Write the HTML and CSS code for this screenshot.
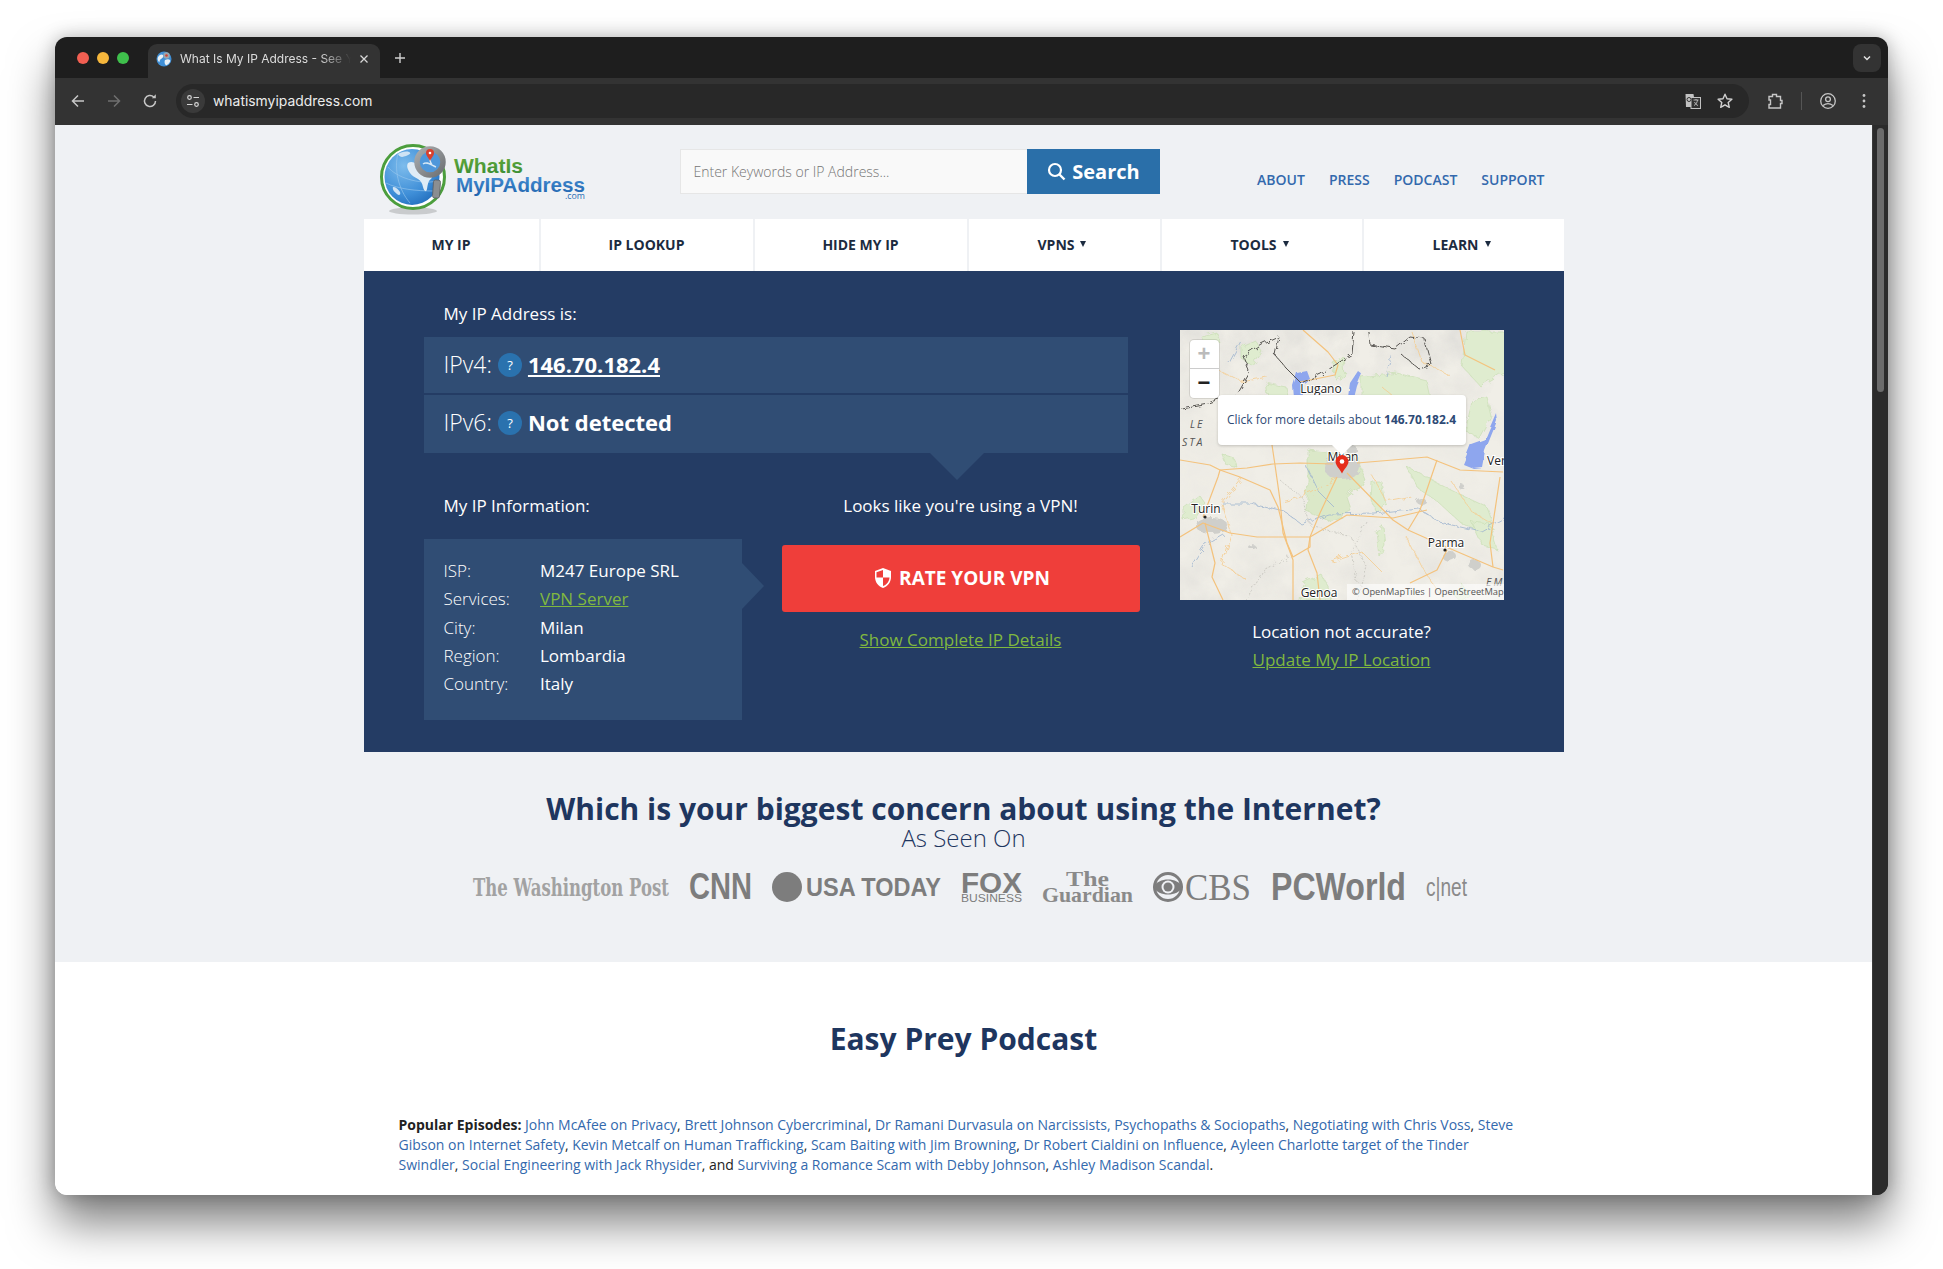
FILE: index.html
```html
<!DOCTYPE html>
<html lang="en">
<head>
    <meta charset="UTF-8">
    <title>What Is My IP Address - See Your Public Address - IPv4 &amp; IPv6</title>
    <link rel="stylesheet" href="styles.css">
</head>
<body>
<div class="window">
    <div class="tabstrip">
        <div class="lights"><i class="light red"></i><i class="light yellow"></i><i class="light green"></i></div>
        <div class="tab">
            <svg class="favicon" width="16" height="16" viewBox="0 0 16 16">
                <circle cx="8" cy="8" r="7.5" fill="#3f8fd6"/>
                <path d="M2 6c2-3 4-3 5-2s0 3-2 4-1 4-2 3-2-3-1-5zM9 9c2-1 4-1 5 0s-1 4-3 5-3-3-2-5z" fill="#e8f0f6"/>
                <circle cx="10.5" cy="4.5" r="3.2" fill="#9aa6ad"/>
                <circle cx="10.5" cy="4.5" r="1.3" fill="#d8402e"/>
            </svg>
            <span class="tab-title">What Is My IP Address - See Your</span>
            <svg class="tab-close" width="10" height="10" viewBox="0 0 10 10"><path d="M1.5 1.5l7 7M8.500 1.500l-7 7" stroke="#d8d8d8" stroke-width="1.300"/></svg>
        </div>
        <svg class="new-tab" width="12" height="12" viewBox="0 0 12 12"><path d="M6 1v10M1 6h10" stroke="#cfcfcf" stroke-width="1.400"/></svg>
        <div class="tab-search">
            <svg width="10" height="10" viewBox="0 0 10 10"><path d="M2 3.500l3 3 3-3" fill="none" stroke="#e2e2e2" stroke-width="1.500"/></svg>
        </div>
    </div>
    <div class="toolbar">
        <svg class="tool" viewBox="0 0 18 18"><path d="M15 9H4M9 3.500L3.500 9 9 14.500" fill="none" stroke="#c7c7c7" stroke-width="1.500"/></svg>
        <svg class="tool" viewBox="0 0 18 18"><path d="M3 9h11M9 3.500L14.500 9 9 14.500" fill="none" stroke="#707070" stroke-width="1.500"/></svg>
        <svg class="tool" viewBox="0 0 18 18"><path d="M14.500 9a5.500 5.500 0 1 1-1.700-4" fill="none" stroke="#c7c7c7" stroke-width="1.500"/><path d="M14.800 2.300v4h-4z" fill="#c7c7c7"/></svg>
        <div class="omnibox">
            <span class="site-info">
                <svg width="14" height="14" viewBox="0 0 14 14"><circle cx="3.500" cy="3.500" r="1.800" fill="none" stroke="#d6d6d6" stroke-width="1.200"/><path d="M7.500 3.500H13M1 10.500h5.500" stroke="#d6d6d6" stroke-width="1.200"/><circle cx="10.500" cy="10.500" r="1.800" fill="none" stroke="#d6d6d6" stroke-width="1.200"/></svg>
            </span>
            <span class="url">whatismyipaddress.com</span>
            <svg class="translate" width="18" height="18" viewBox="0 0 18 18">
                <path d="M1.500 2h8l2 13h-9.500z" fill="#c2c2c2"/>
                <rect x="7" y="5.500" width="9.500" height="11" fill="#333" stroke="#c2c2c2" stroke-width="1"/>
                <path d="M9.500 8h5M12 7v1M10 13.500c2-1 3.200-3 3.500-5.500M10.500 10c.6 1.500 2 3 3.500 3.500" fill="none" stroke="#c2c2c2" stroke-width=".9"/>
                <circle cx="5" cy="7.500" r="2" fill="none" stroke="#333" stroke-width="1"/>
            </svg>
            <svg class="star" width="18" height="18" viewBox="0 0 18 18"><path d="M9 2.200l2 4.500 4.900.5-3.700 3.300 1.100 4.800L9 12.800l-4.300 2.500 1.100-4.800L2.100 7.200 7 6.700z" fill="none" stroke="#d0d0d0" stroke-width="1.400" stroke-linejoin="round"/></svg>
        </div>
        <svg class="tool ext" viewBox="0 0 18 18"><path d="M3 4.500h3.500V2.500h4v2H14.500v4h1.500v3h-1.500V16H3v-3.500h1.500v-4.500H3z" fill="none" stroke="#c7c7c7" stroke-width="1.400"/></svg>
        <i class="tool-sep"></i>
        <svg class="tool profile" viewBox="0 0 18 18"><circle cx="9" cy="9" r="7.300" fill="none" stroke="#c7c7c7" stroke-width="1.300"/><circle cx="9" cy="7.300" r="2.400" fill="none" stroke="#c7c7c7" stroke-width="1.300"/><path d="M4 13.500c3-2.200 7-2.200 10 0" fill="none" stroke="#c7c7c7" stroke-width="1.300"/></svg>
        <svg class="tool menu" viewBox="0 0 18 18"><circle cx="9" cy="3.500" r="1.400" fill="#c7c7c7"/><circle cx="9" cy="9" r="1.400" fill="#c7c7c7"/><circle cx="9" cy="14.500" r="1.400" fill="#c7c7c7"/></svg>
    </div>

    <div class="viewport">
        <div class="page">
            <div class="grey-area">
                <div class="wrap">
                    <header class="site-header">
                        <svg class="logo" width="212" height="78" viewBox="0 0 212 78">
                            <defs>
                                <radialGradient id="globe" cx=".35" cy=".3" r=".85"><stop offset="0" stop-color="#7dbcec"/><stop offset=".6" stop-color="#3f8fd8"/><stop offset="1" stop-color="#1c66b6"/></radialGradient>
                                <linearGradient id="blueText" x1="0" y1="0" x2="0" y2="1"><stop offset="0" stop-color="#4a94d8"/><stop offset="1" stop-color="#1f63ad"/></linearGradient>
                                <linearGradient id="greenText" x1="0" y1="0" x2="0" y2="1"><stop offset="0" stop-color="#69ad3c"/><stop offset="1" stop-color="#358a34"/></linearGradient>
                                <linearGradient id="lensRing" x1="0" y1="0" x2="1" y2="1"><stop offset="0" stop-color="#a9acae"/><stop offset="1" stop-color="#6e7174"/></linearGradient>
                            </defs>
                            <ellipse cx="35" cy="72" rx="24" ry="3.500" fill="#c9cbcd"/>
                            <ellipse cx="35" cy="38" rx="31.500" ry="31.500" fill="#fff" stroke="#4c9e3d" stroke-width="3"/>
                            <ellipse cx="34" cy="38" rx="27.500" ry="28" fill="url(#globe)"/>
                            <path d="M10 28c8 10 30 18 50 14M20 14c-4 16 0 36 12 50M8 44c12 6 30 8 48 8" fill="none" stroke="#9cc9ee" stroke-width=".6"/>
                            <path d="M30 24c3-2 6-1 8 1 3 0 10 3 15 6 3 3 2 6 0 9-3 2-3 5-4 10-1 4-3 2-4-2s-2-6-5-8-6-3-8-6-4-7-2-10z" fill="#dfecf6"/>
                            <path d="M20 15c3-2 8-3 11-2s0 3-3 4-6 2-8-2zM15 48c3 0 5 2 7 5 1 3-1 4-3 2s-5-4-4-7z" fill="#cfe3f4"/>
                            <circle cx="52" cy="23" r="13" fill="#4f97da" stroke="url(#lensRing)" stroke-width="5.500"/>
                            <path d="M45 25c4-3 8 1 13 3M52 15c-1 5 0 8 2 11" fill="none" stroke="#d5e7f5" stroke-width="1.500"/>
                            <path d="M48 14a4 4 0 0 1 8 0c0 3-3 5-4 8-1-3-4-5-4-8z" fill="#d9402f"/>
                            <circle cx="52" cy="14" r="1.300" fill="#fff"/>
                            <rect x="55" y="41" width="7" height="18" rx="2" transform="rotate(4 58 50)" fill="#8b8e91" stroke="#5c5f62" stroke-width=".8"/>
                            <text x="76" y="34" class="logo-what" fill="url(#greenText)" textLength="69" lengthAdjust="spacingAndGlyphs">WhatIs</text>
                            <text x="78" y="53" class="logo-my" fill="url(#blueText)" textLength="129" lengthAdjust="spacingAndGlyphs">MyIPAddress</text>
                            <text x="187" y="60" class="logo-com" textLength="20" lengthAdjust="spacingAndGlyphs">.com</text>
                        </svg>
                        <form class="search">
                            <input class="search-input" type="text" placeholder="Enter Keywords or IP Address...">
                            <button class="search-btn" type="button">
                                <svg width="19" height="19" viewBox="0 0 19 19"><circle cx="8" cy="8" r="6" fill="none" stroke="#fff" stroke-width="2.200"/><path d="M12.500 12.500l5 5" stroke="#fff" stroke-width="2.400"/></svg>
                                Search
                            </button>
                        </form>
                        <nav class="top-links">
                            <a href="#">ABOUT</a>
                            <a href="#">PRESS</a>
                            <a href="#">PODCAST</a>
                            <a href="#">SUPPORT</a>
                        </nav>
                    </header>

                    <nav class="main-nav">
                        <a href="#" style="width:177px">MY IP</a>
                        <a href="#" style="width:214px">IP LOOKUP</a>
                        <a href="#" style="width:214px">HIDE MY IP</a>
                        <a href="#" style="width:193px">VPNS <span class="caret"></span></a>
                        <a href="#" style="width:202px">TOOLS <span class="caret"></span></a>
                        <a href="#" style="width:200px">LEARN <span class="caret"></span></a>
                    </nav>

                    <section class="panel">
                        <div class="panel-left">
                            <div class="label ip-label">My IP Address is:</div>
                            <div class="ip-row ip-row-first">
                                <span class="ip-kind">IPv4:</span>
                                <span class="help">?</span>
                                <a class="ip-value" href="#">146.70.182.4</a>
                            </div>
                            <div class="ip-row ip-row-last">
                                <span class="ip-kind">IPv6:</span>
                                <span class="help">?</span>
                                <span class="ip-value plain">Not detected</span>
                            </div>
                            <div class="panel-lower">
                                <div class="info-col">
                                    <div class="label">My IP Information:</div>
                                    <div class="info-box">
                                        <div class="info-row"><span>ISP:</span><b>M247 Europe SRL</b></div>
                                        <div class="info-row"><span>Services:</span><b><a class="green-link" href="#">VPN Server</a></b></div>
                                        <div class="info-row"><span>City:</span><b>Milan</b></div>
                                        <div class="info-row"><span>Region:</span><b>Lombardia</b></div>
                                        <div class="info-row"><span>Country:</span><b>Italy</b></div>
                                    </div>
                                </div>
                                <div class="vpn-col">
                                    <div class="label">Looks like you're using a VPN!</div>
                                    <a class="rate-btn" href="#">
                                        <svg width="18" height="22" viewBox="0 0 18 22"><path d="M9 1l8 3v6c0 5-3 9-8 11-5-2-8-6-8-11V4z" fill="#fff"/><path d="M9 3v7.500H2.500V5.200zM9 10.500h6.500c-.2 4-2.700 7-6.500 8.600z" fill="#ef3e3a"/></svg>
                                        RATE YOUR VPN
                                    </a>
                                    <a class="green-link details-link" href="#">Show Complete IP Details</a>
                                </div>
                            </div>
                        </div>
                        <div class="panel-map">
                            <div class="map">
                                <svg width="324" height="270" viewBox="0 0 324 270">
                                    <defs>
                                        <filter id="hills" x="0" y="0" width="100%" height="100%">
                                            <feTurbulence type="fractalNoise" baseFrequency=".03" numOctaves="4" seed="7"/>
                                            <feColorMatrix values="0 0 0 0 .72  0 0 0 0 .71  0 0 0 0 .68  1.800 0 0 0 -.62"/>
                                        </filter>
                                        <filter id="wiggle" x="-5%" y="-5%" width="110%" height="110%">
                                            <feTurbulence type="turbulence" baseFrequency=".09" numOctaves="2" seed="3"/>
                                            <feDisplacementMap in="SourceGraphic" scale="6"/>
                                        </filter>
                                        <filter id="wiggle-soft" x="-5%" y="-5%" width="110%" height="110%">
                                            <feTurbulence type="turbulence" baseFrequency=".05" numOctaves="2" seed="9"/>
                                            <feDisplacementMap in="SourceGraphic" scale="4"/>
                                        </filter>
                                        <linearGradient id="hillFade" x1="0" y1="0" x2="0" y2="1">
                                            <stop offset="0" stop-color="#fff"/>
                                            <stop offset=".3" stop-color="#666"/>
                                            <stop offset=".55" stop-color="#222"/>
                                            <stop offset=".8" stop-color="#555"/>
                                            <stop offset="1" stop-color="#bbb"/>
                                        </linearGradient>
                                        <mask id="hillMask"><rect width="324" height="270" fill="url(#hillFade)"/></mask>
                                    </defs>
                                    <rect width="324" height="270" fill="#f0eee7"/>
                                    <g mask="url(#hillMask)"><rect width="324" height="270" filter="url(#hills)"/></g>
                                    <g fill="#dfeccf" stroke="#c4dcae" stroke-width=".6" filter="url(#wiggle)">
                                        <path d="M127 118l48 6 10 26-20 15 5 15-20 10-25-10 2-30z" fill="#dbe8c8"/>
                                        <path d="M180 46l35-5 30 8 5 22-30 8-20-8-20 0z"/>
                                        <path d="M285 0h39v40l-25 15-18-20z"/>
                                        <path d="M290 70l15-5 5 20-12 22-15-8z"/>
                                        <path d="M60 15l14-6 6 11-9 14-11-7z"/>
                                        <path d="M85 52l20 4 3 14-20 2z"/>
                                        <path d="M225 135l12 22 20 14 22 20 20 10 14-4-8-22-26-12-24-12z"/>
                                        <path d="M190 150l10 0 4 22-8 10-7-14z"/>
                                        <path d="M2 176l16-12 6 8-12 15-10 2z"/>
                                        <path d="M122 252l18-9 8 14 3 13h-32z"/>
                                        <path d="M40 122l12 4 4 10-12-3z"/>
                                        <path d="M195 200l7-5 2 20-6 10z"/>
                                        <path d="M290 190l18 2 8 26-15-4z"/>
                                        <path d="M270 262l12-8 6 10-8 6z"/>
                                        <path d="M20 5l15-4 3 10-14 4z"/>
                                        <path d="M150 30l12-5 2 20-10 3z"/>
                                    </g>
                                    <g fill="#cfcfcb" filter="url(#wiggle)">
                                        <ellipse cx="161" cy="136" rx="18" ry="13"/>
                                        <ellipse cx="30" cy="194" rx="16" ry="8"/>
                                        <ellipse cx="268" cy="225" rx="7" ry="5"/>
                                        <ellipse cx="293" cy="233" rx="6" ry="5"/>
                                        <ellipse cx="70" cy="215" rx="4" ry="2"/>
                                        <ellipse cx="240" cy="170" rx="5" ry="3"/>
                                        <ellipse cx="280" cy="155" rx="3" ry="2"/>
                                        <ellipse cx="170" cy="118" rx="6" ry="4"/>
                                    </g>
                                    <g fill="none" stroke="#9db4cf" stroke-width=".8" filter="url(#wiggle)">
                                        <path d="M40 172l30 0 33 8 17 13 27-10 46-1 44-5 20 13 43 10 23-13"/>
                                        <path d="M125 135l12 25 15 15"/>
                                        <path d="M10 235l14-22 18-10"/>
                                        <path d="M210 25l-5 20M60 10l-12 22"/>
                                    </g>
                                    <g fill="#8ea6ee" filter="url(#wiggle-soft)">
                                        <path d="M116 42l10-2 3 8-8 5 1 12-9 2-1-12z"/>
                                        <path d="M167 66l2-14 8-12 4 3-5 12-3 12z"/>
                                        <path d="M315 82l-11 26-14 5-8 20 10 4 9-1 3-16 12-30z"/>
                                    </g>
                                    <g fill="none" stroke="#bdbcb4" stroke-width=".7" stroke-dasharray="2 1.500" filter="url(#wiggle)">
                                        <path d="M100 150l20 15 10 30 40 10 15 30-10 35"/>
                                        <path d="M185 190l-15 30 5 30"/>
                                        <path d="M65 270l15-30 30-15"/>
                                    </g>
                                    <g fill="none" stroke="#f5cb8e" stroke-width=".8" filter="url(#wiggle)">
                                        <path d="M60 147l-20 25 10 31M100 170l30-8 27-15M190 143l15 27 25-5M270 150l20 30 25 15"/>
                                        <path d="M50 203l-10 30 25 15M150 230l30-10 20 20M225 205l15 30 20 30"/>
                                        <path d="M230 0l10 30 30 15M30 35l30 15 25-5M200 55l30 25"/>
                                    </g>
                                    <g fill="none" stroke="#f4c27c" stroke-width="1.200" stroke-linejoin="round">
                                        <path d="M23 187l15-40 2-7 27-2 26-4 27-1 33 1"/>
                                        <path d="M40 140l20 7 30 13 8 17 9 36 6 14"/>
                                        <path d="M92 115l3 20 5 35 3 33 10 27v40"/>
                                        <path d="M167 143l46 47 15 10 29 13 56 24 10 3"/>
                                        <path d="M157 147l-17 36-10 24-2 13 9 23 3 27"/>
                                        <path d="M0 207l23-14 27 10 27 4h53"/>
                                        <path d="M130 207l37-22 46 3 34-8"/>
                                        <path d="M177 133l36-3 34-3 33 13 43 2"/>
                                        <path d="M257 130l-17 50-12 20"/>
                                        <path d="M25 193l10 40-3 14 11 23"/>
                                        <path d="M113 227l17-10v-10"/>
                                        <path d="M313 237l-3-24 10-66"/>
                                        <path d="M230 253l27-13 10-20"/>
                                        <path d="M123 0l25 22 10 13-3 10-35 7"/>
                                        <path d="M0 130l30 5 10 5"/>
                                        <path d="M280 0l5 25 30 15"/>
                                    </g>
                                    <g fill="none" stroke="#55534f" stroke-width="1" filter="url(#wiggle)">
                                        <path d="M0 77l27-5 11-4 17-5 13-23-6-15 18-12 17-8-4 18 12 14 15 15 20-9 10-8 20-13 2-22"/>
                                        <path d="M187 0l1 13 25 4 15-12 15 2 7 26-13 4-17-14"/>
                                    </g>
                                    <text class="map-city" x="141" y="63" text-anchor="middle">Lugano</text>
                                    <text class="map-city" x="163" y="131" text-anchor="middle">Milan</text>
                                    <text class="map-city" x="26" y="183" text-anchor="middle">Turin</text>
                                    <text class="map-city" x="266" y="217" text-anchor="middle">Parma</text>
                                    <text class="map-city" x="139" y="267" text-anchor="middle">Genoa</text>
                                    <text class="map-city" x="307" y="135">Ver</text>
                                    <text class="map-region" x="10" y="98">LE</text>
                                    <text class="map-region" x="2" y="116">STA</text>
                                    <text class="map-region" x="306" y="256">EM</text>
                                    <circle cx="25" cy="187" r="1.600" fill="#222"/>
                                    <circle cx="265" cy="220" r="1.600" fill="#222"/>
                                    <rect x="167" y="254" width="157" height="16" fill="#fff" opacity=".6"/>
                                    <text class="map-attr" x="172" y="265">© OpenMapTiles | OpenStreetMap</text>
                                    <path d="M162 125a6.500 6.500 0 0 1 6.500 6.500c0 4-4 7-6.500 12-2.500-5-6.500-8-6.500-12a6.500 6.500 0 0 1 6.500-6.500z" fill="#e62d1c"/>
                                    <circle cx="162" cy="131.500" r="2.300" fill="#fff"/>
                                </svg>
                                <div class="map-zoom">
                                    <span class="zoom-btn faded">+</span>
                                    <span class="zoom-btn">−</span>
                                </div>
                                <div class="map-popup">Click for more details about <b>146.70.182.4</b></div>
                            </div>
                            <div class="label location-q">Location not accurate?</div>
                            <a class="green-link location-link" href="#">Update My IP Location</a>
                        </div>
                    </section>

                    <h2 class="poll-title">Which is your biggest concern about using the Internet?</h2>
                    <div class="seen-on">As Seen On</div>
                    <div class="press-logos">
                        <svg width="196" height="30"><text class="lg-wapo" x="0" y="24" textLength="196" lengthAdjust="spacingAndGlyphs">The Washington Post</text></svg>
                        <svg width="63" height="30"><text class="lg-cnn" x="0" y="27" textLength="63" lengthAdjust="spacingAndGlyphs">CNN</text></svg>
                        <svg width="169" height="30"><circle cx="15" cy="15" r="15" fill="#7d7d7d"/><text class="lg-usa" x="34" y="24" textLength="135" lengthAdjust="spacingAndGlyphs">USA TODAY</text></svg>
                        <svg width="61" height="30"><text class="lg-fox" x="0" y="21" textLength="61" lengthAdjust="spacingAndGlyphs">FOX</text><text class="lg-fox-sub" x="0" y="30" textLength="61" lengthAdjust="spacingAndGlyphs">BUSINESS</text></svg>
                        <svg width="91" height="30"><text class="lg-guardian" x="24" y="14" textLength="43" lengthAdjust="spacingAndGlyphs">The</text><text class="lg-guardian" x="0" y="30" textLength="91" lengthAdjust="spacingAndGlyphs">Guardian</text></svg>
                        <svg width="98" height="30">
                            <circle cx="15" cy="15" r="13.500" fill="none" stroke="#7d7d7d" stroke-width="3"/>
                            <path d="M0 15C6 5 24 5 30 15 24 25 6 25 0 15z" fill="#7d7d7d"/>
                            <circle cx="15" cy="15" r="6.500" fill="#eff1f4"/>
                            <circle cx="15" cy="15" r="4.500" fill="#7d7d7d"/>
                            <text class="lg-cbs" x="32" y="28" textLength="66" lengthAdjust="spacingAndGlyphs">CBS</text>
                        </svg>
                        <svg width="135" height="30"><text class="lg-pc" x="0" y="28" textLength="135" lengthAdjust="spacingAndGlyphs">PCWorld</text></svg>
                        <svg width="41" height="30"><text class="lg-cnet" x="0" y="24" textLength="41" lengthAdjust="spacingAndGlyphs">c|net</text></svg>
                    </div>
                </div>
            </div>

            <div class="white-area">
                <div class="wrap">
                    <h2 class="podcast-title">Easy Prey Podcast</h2>
                    <p class="episodes"><b>Popular Episodes:</b> <a href="#">John McAfee on Privacy</a>, <a href="#">Brett Johnson Cybercriminal</a>, <a href="#">Dr Ramani Durvasula on Narcissists, Psychopaths &amp; Sociopaths</a>, <a href="#">Negotiating with Chris Voss</a>, <a href="#">Steve</a> <a href="#">Gibson on Internet Safety</a>, <a href="#">Kevin Metcalf on Human Trafficking</a>, <a href="#">Scam Baiting with Jim Browning</a>, <a href="#">Dr Robert Cialdini on Influence</a>, <a href="#">Ayleen Charlotte target of the Tinder</a> <a href="#">Swindler</a>, <a href="#">Social Engineering with Jack Rhysider</a>, and <a href="#">Surviving a Romance Scam with Debby Johnson</a>, <a href="#">Ashley Madison Scandal</a>.</p>
                </div>
            </div>
        </div>
        <div class="scrollbar"><div class="thumb"></div></div>
    </div>
</div>
</body>
</html>
```

FILE: styles.css
```css
* {
    box-sizing: border-box;
}

html, body {
    margin: 0;
    height: 1269px;
    overflow: hidden;
    background-color: #fff;
}

body {
    padding: 37px 0 0 55px;
    font-family: "Open Sans", Arial, sans-serif;
}

a {
    color: inherit;
}

/* browser window */
.window {
    width: 1833px;
    height: 1158px;
    border-radius: 12px;
    overflow: hidden;
    background-color: #1e1e1e;
    box-shadow: 0 28px 46px rgba(0,0,0,0.5), 0 0 18px rgba(0,0,0,0.25);
    display: flex;
    flex-direction: column;
}

.tabstrip {
    height: 41px;
    flex: none;
    display: flex;
    padding-top: 7px;
    position: relative;
}

.lights {
    display: flex;
    gap: 8px;
    padding: 8px 0 0 22px;
    width: 93px;
}

.light {
    width: 12px;
    height: 12px;
    border-radius: 50%;
}

.red { background-color: #f25f52; }
.yellow { background-color: #f6b73c; }
.green { background-color: #3fc04c; }

.tab {
    width: 232px;
    height: 34px;
    background-color: #333;
    border-radius: 9px 9px 0 0;
    display: flex;
    align-items: center;
    padding: 0 11px 5px 8px;
    gap: 8px;
}

.tab-title {
    flex: 1;
    color: #dcdcdc;
    font: 12px/16px Inter, Roboto, sans-serif;
    white-space: nowrap;
    overflow: hidden;
    -webkit-mask-image: linear-gradient(to right, #000 82%, transparent 100%);
    mask-image: linear-gradient(to right, #000 82%, transparent 100%);
}

.new-tab {
    margin: 8px 0 0 14px;
}

.tab-search {
    margin-left: auto;
    margin-right: 7px;
    width: 28px;
    height: 28px;
    border-radius: 8px;
    background-color: #333;
    display: flex;
    align-items: center;
    justify-content: center;
}

.toolbar {
    height: 47px;
    flex: none;
    background-color: #333;
    display: flex;
    align-items: center;
    padding: 0 0 1px 14px;
    gap: 18px;
}

.tool {
    width: 18px;
    height: 18px;
    flex: none;
}

.omnibox {
    width: 1573px;
    height: 34px;
    margin-left: -1px;
    flex: none;
    border-radius: 17px;
    background-color: #282828;
    display: flex;
    align-items: center;
    padding: 0 15px 0 5px;
}

.site-info {
    width: 24px;
    height: 24px;
    border-radius: 50%;
    background-color: #3a3a3a;
    display: flex;
    align-items: center;
    justify-content: center;
}

.url {
    margin-left: 8px;
    flex: 1;
    color: #ececec;
    font: 13.900px/18px Inter, Roboto, sans-serif;
}

.star {
    margin-left: 14px;
}

.ext {
    margin-left: -1px;
}

.tool-sep {
    width: 1px;
    height: 18px;
    background-color: #555;
    margin: 0 -1px;
}

/* page */
.viewport {
    flex: 1;
    display: flex;
    min-height: 0;
}

.page {
    flex: 1;
    overflow: hidden;
    background-color: #fff;
}

.scrollbar {
    width: 16px;
    flex: none;
    background-color: #2b2b2b;
    border-left: 1px solid #3a3a3a;
    padding: 3px 4px 0;
}

.thumb {
    height: 264px;
    border-radius: 4px;
    background-color: #6b6b6b;
}

.grey-area {
    height: 837px;
    background-color: #eff1f4;
}

.wrap {
    width: 1200px;
    margin: 0 auto;
}

.site-header {
    height: 94px;
    display: flex;
}

.logo {
    margin: 14px 0 0 14px;
    flex: none;
    overflow: visible;
}

.logo-what {
    font: bold 21px "Liberation Sans", Arial, sans-serif;
}

.logo-my {
    font: bold 21px "Liberation Sans", Arial, sans-serif;
}

.logo-com {
    font: 9px "Open Sans", sans-serif;
    fill: #2a6fb5;
}

.search {
    display: flex;
    margin: 24px 0 0 90px;
    height: 45px;
}

.search-input {
    width: 347px;
    border: 1px solid #e6e6e6;
    border-right: none;
    background-color: #f9f9f9;
    padding: 0 13px;
    font: 14px "Open Sans", sans-serif;
    color: #555;
}

.search-input::placeholder {
    color: #757575;
    font-weight: 300;
}

.search-btn {
    width: 133px;
    border: none;
    padding-left: 7px;
    background-color: #2a6fa9;
    color: #fff;
    font: bold 20px "Open Sans", sans-serif;
    display: flex;
    align-items: center;
    justify-content: center;
    gap: 6px;
}

.top-links {
    margin-left: auto;
    padding: 45px 19px 0 0;
    display: flex;
    gap: 24px;
    font-size: 14px;
    font-weight: 600;
    line-height: 20px;
    color: #3369ad;
}

.top-links a {
    text-decoration: none;
}

.main-nav {
    height: 52px;
    display: flex;
    background-color: #fff;
}

.main-nav a {
    display: flex;
    align-items: center;
    justify-content: center;
    gap: 5px;
    padding-bottom: 2px;
    border-right: 2px solid #eff1f4;
    color: #1c2b40;
    font-size: 14px;
    font-weight: 700;
    text-decoration: none;
}

.main-nav a:last-child {
    border-right: none;
}

.caret {
    margin: 0 4px 0 1px;
    border-style: solid;
    border-width: 6px 3px 0;
    border-color: #1c2b40 transparent transparent;
}

.panel {
    height: 481px;
    background-color: #243c64;
    color: #fff;
    display: flex;
    padding-left: 60px;
}

.panel-left {
    width: 716px;
    padding-top: 29px;
}

.label {
    font-size: 17px;
    line-height: 28px;
    padding-left: 20px;
}

.ip-label {
    margin-bottom: 9px;
}

.ip-row {
    width: 704px;
    background-color: #304d74;
    display: flex;
    align-items: center;
    padding: 0 0 2px 20px;
}

.ip-row-first {
    height: 56px;
    margin-bottom: 2px;
}

.ip-row-last {
    height: 58px;
    padding-bottom: 4px;
    position: relative;
}

.ip-row-last::after {
    content: "";
    position: absolute;
    top: 100%;
    left: 506px;
    border-style: solid;
    border-width: 27px 27.500px 0;
    border-color: #304d74 transparent transparent;
}

.ip-kind {
    font-size: 23px;
    font-weight: 300;
}

.help {
    width: 24px;
    height: 24px;
    border-radius: 50%;
    background-color: #2a72ae;
    margin: 2px 6px 0 6px;
    font-size: 13px;
    line-height: 24px;
    text-align: center;
}

.ip-value {
    font-size: 22px;
    font-weight: 700;
}

.panel-lower {
    display: flex;
    padding-top: 39px;
}

.info-col {
    width: 318px;
}

.info-box {
    margin-top: 19px;
    height: 181px;
    background-color: #304d74;
    padding: 18px 20px;
    position: relative;
    font-size: 17px;
}

.info-box::after {
    content: "";
    position: absolute;
    top: 24px;
    left: 100%;
    border-style: solid;
    border-width: 23px 0 23px 22px;
    border-color: transparent transparent transparent #304d74;
}

.info-row {
    display: flex;
    height: 28.250px;
    line-height: 27px;
}

.info-row span {
    width: 96.500px;
    font-weight: 300;
}

.info-row b {
    font-weight: 400;
}

.green-link {
    color: #80b83f;
}

.vpn-col {
    width: 358px;
    margin-left: 40px;
    text-align: center;
}

.vpn-col .label {
    padding-left: 0;
}

.rate-btn {
    margin-top: 25px;
    height: 67px;
    padding: 0 0 2px 3px;
    border-radius: 3px;
    background-color: #ef3e3a;
    color: #fff;
    font-size: 19px;
    font-weight: 700;
    text-decoration: none;
    display: flex;
    align-items: center;
    justify-content: center;
    gap: 7px;
}

.details-link {
    display: block;
    margin-top: 14px;
    font-size: 17px;
    line-height: 28px;
}

.panel-map {
    margin-left: 40px;
    width: 324px;
    padding-top: 59px;
    text-align: center;
}

.map {
    width: 324px;
    height: 270px;
    position: relative;
    overflow: hidden;
}

.map svg {
    display: block;
}

.map-city {
    font: 12px "Open Sans", sans-serif;
    fill: #222;
    stroke: #fff;
    stroke-width: 2px;
    paint-order: stroke;
}

.map-region {
    font: italic 10.500px "Open Sans", sans-serif;
    fill: #555;
    letter-spacing: 2px;
}

.map-attr {
    font: 9.300px "Open Sans", sans-serif;
    fill: #555;
}

.map-zoom {
    position: absolute;
    left: 10px;
    top: 10px;
    width: 29px;
    height: 58px;
    background-color: #fff;
    border-radius: 4px;
    box-shadow: 0 0 0 1px rgba(0,0,0,0.1);
}

.zoom-btn {
    display: block;
    height: 29px;
    border-bottom: 1px solid #ccc;
    color: #222;
    font: bold 22px/27px "Liberation Sans", sans-serif;
}

.zoom-btn:last-child {
    border-bottom: none;
}

.zoom-btn.faded {
    color: #bbb;
}

.map-popup {
    position: absolute;
    left: 38px;
    top: 65px;
    width: 248px;
    height: 50px;
    border-radius: 4px;
    background-color: #fff;
    color: #2d4a75;
    font-size: 12px;
    line-height: 50px;
    white-space: nowrap;
    box-shadow: 0 1px 3px rgba(0,0,0,0.2);
}

.map-popup::after {
    content: "";
    position: absolute;
    top: 100%;
    left: 114px;
    border-style: solid;
    border-width: 10px 10px 0;
    border-color: #fff transparent transparent;
}

.map-popup b {
    font-weight: 700;
}

.location-q {
    margin-top: 18px;
    padding-left: 0;
}

.location-link {
    display: block;
    font-size: 17px;
    line-height: 28px;
}

.poll-title {
    margin: 40px 0 0;
    text-align: center;
    color: #1e365f;
    font-size: 30px;
    line-height: 34px;
    font-weight: 700;
}

.seen-on {
    text-align: center;
    color: #1e365f;
    font-size: 24px;
    line-height: 24px;
    font-weight: 300;
}

.press-logos {
    margin-top: 22px;
    padding-left: 109px;
    display: flex;
    gap: 20px;
}

.press-logos svg {
    overflow: visible;
}

.lg-wapo {
    font: bold 25px "DejaVu Serif", serif;
    fill: #a2a2a2;
}

.lg-cnn {
    font: bold 36px "Liberation Sans", sans-serif;
    fill: #7d7d7d;
}

.lg-usa {
    font: bold 25px "Liberation Sans", sans-serif;
    fill: #7d7d7d;
}

.lg-fox {
    font: 900 29px "Liberation Sans", sans-serif;
    fill: #7d7d7d;
}

.lg-fox-sub {
    font: 10px "Liberation Sans", sans-serif;
    fill: #7d7d7d;
}

.lg-guardian {
    font: bold 21px "Liberation Serif", serif;
    fill: #8a8a8a;
}

.lg-cbs {
    font: 38px "Liberation Serif", serif;
    fill: #7d7d7d;
}

.lg-pc {
    font: bold 38px "Liberation Sans", sans-serif;
    fill: #7d7d7d;
}

.lg-cnet {
    font: 26px "Liberation Sans", sans-serif;
    fill: #8a8a8a;
}

.white-area {
    background-color: #fff;
    height: 321px;
}

.podcast-title {
    margin: 0;
    padding-top: 57px;
    text-align: center;
    color: #1e365f;
    font-size: 30px;
    line-height: 40px;
    font-weight: 700;
}

.episodes {
    margin: 56px 0 0;
    padding: 0 35px;
    font-size: 14px;
    line-height: 20px;
    color: #222;
}

.episodes a {
    color: #3369ad;
    text-decoration: none;
}
```
